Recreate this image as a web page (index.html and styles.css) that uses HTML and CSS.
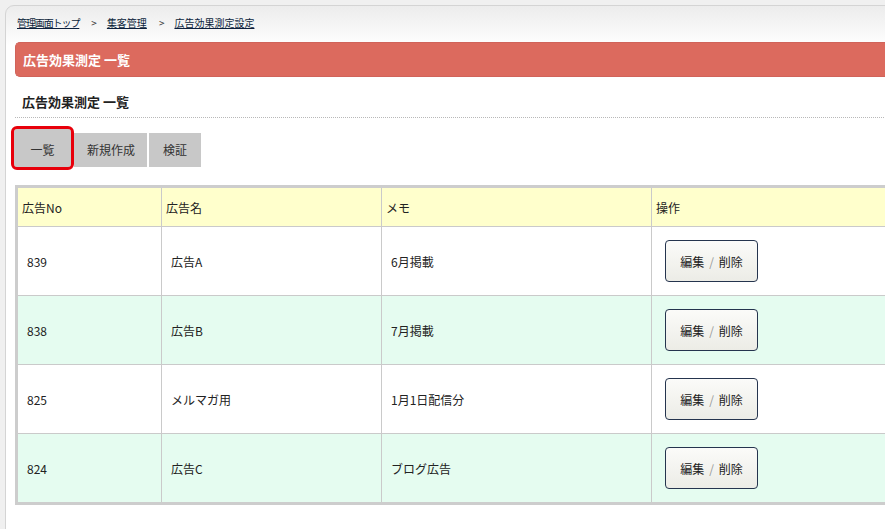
FILE: index.html
```html
<!DOCTYPE html>
<html lang="ja">
<head>
<meta charset="utf-8">
<title>広告効果測定 一覧</title>
<link rel="stylesheet" href="styles.css">
</head>
<body>
<div class="page">
  <div class="crumbs">
    <a class="top" href="#">管理画面トップ</a><span class="sep">&gt;</span><a href="#">集客管理</a><span class="sep">&gt;</span><a href="#">広告効果測定設定</a>
  </div>
  <div class="titlebar">広告効果測定 一覧</div>
  <div class="subtitle">広告効果測定 一覧</div>
  <div class="tabs">
    <a class="tab active" href="#">一覧</a>
    <a class="tab" href="#">新規作成</a>
    <a class="tab" href="#">検証</a>
  </div>
  <table class="list">
    <colgroup>
      <col class="c1"><col class="c2"><col class="c3"><col class="c4">
    </colgroup>
    <thead>
      <tr><th>広告No</th><th>広告名</th><th>メモ</th><th>操作</th></tr>
    </thead>
    <tbody>
      <tr><td>839</td><td>広告A</td><td>6月掲載</td><td><button class="edit">編集<span class="slash">/</span>削除</button></td></tr>
      <tr class="alt"><td>838</td><td>広告B</td><td>7月掲載</td><td><button class="edit">編集<span class="slash">/</span>削除</button></td></tr>
      <tr><td>825</td><td>メルマガ用</td><td>1月1日配信分</td><td><button class="edit">編集<span class="slash">/</span>削除</button></td></tr>
      <tr class="alt last"><td>824</td><td>広告C</td><td>ブログ広告</td><td><button class="edit">編集<span class="slash">/</span>削除</button></td></tr>
    </tbody>
  </table>
</div>
</body>
</html>
```
FILE: styles.css
```css
html, body {
  margin: 0;
  padding: 0;
  overflow: hidden;
  background: #f0f0f0;
}
body {
  font-family: "Noto Sans CJK JP", "Liberation Sans", sans-serif;
  color: #222;
  font-size: 12px;
}
.page {
  margin: 5px 0 0 5px;
  width: 1100px;
  height: 560px;
  box-sizing: border-box;
  border: 1px solid #d4d4d4;
  border-radius: 9px 0 0 0;
  background: linear-gradient(#ececec 0, #fdfdfd 36px, #fff 40px);
  padding: 0 0 0 9px;
}
.crumbs {
  height: 36px;
  padding: 10px 0 0 2px;
  box-sizing: border-box;
  font-size: 10px;
  line-height: 14px;
}
.crumbs a {
  color: #0c1f3c;
  text-decoration: underline;
}
.crumbs a.top { letter-spacing: -1.1px; }
.crumbs .sep {
  color: #333;
  margin: 0 10px 0 12px;
}
.titlebar {
  height: 35px;
  box-sizing: border-box;
  background: #dc6a5e;
  border: 1px solid #d0635a;
  border-right: 0;
  border-radius: 5px 0 0 5px;
  color: #fff;
  font-weight: bold;
  font-size: 13px;
  line-height: 33px;
  padding-left: 7px;
}
.subtitle {
  padding: 17px 0 7px 7px;
  line-height: 16px;
  font-weight: bold;
  font-size: 13px;
  color: #222;
  border-bottom: 1px dotted #b8b8b8;
}
.tabs {
  display: flex;
  align-items: flex-end;
  gap: 2px;
  padding: 11px 0 0 0;
  height: 49px;
  box-sizing: border-box;
}
.tab {
  display: block;
  height: 34px;
  line-height: 34px;
  background: #c8c8c8;
  color: #333;
  text-decoration: none;
  font-size: 12px;
  padding: 0 12px 0 13px;
}
.tab:nth-child(3) { padding: 0 14px; }
.tab.active {
  height: 38px;
  line-height: 42px;
  width: 57px;
  padding: 0;
  text-align: center;
  margin-left: -1px;
  margin-right: 1px;
  outline: 3px solid #e8000b;
  border-radius: 3px;
}
.list {
  margin-top: 18px;
  width: 1000px;
  table-layout: fixed;
  border-collapse: separate;
  border-spacing: 0;
  border: 3px solid #cdcdcd;
  border-right: 0;
}
col.c1 { width: 144px; }
col.c2 { width: 220px; }
col.c3 { width: 270px; }
.list th, .list td {
  border-right: 1px solid #cacaca;
  border-bottom: 1px solid #cacaca;
  text-align: left;
  font-weight: normal;
  font-size: 12px;
  color: #222;
}
.list th {
  background: #ffffcc;
  height: 38px;
  padding: 0 0 0 4px;
}
.list td {
  height: 68px;
  padding: 0 0 0 9px;
  background: #fff;
}
.list tr.alt td { background: #e5fcf0; }
.list tr.last td { border-bottom: 0; height: 68px; }
.list td:nth-child(4) { padding-left: 13px; }
.edit {
  width: 93px;
  height: 42px;
  border: 1px solid #25344e;
  border-radius: 4px;
  background: linear-gradient(#fbfbf9, #ececE6);
  font-family: "Noto Sans CJK JP", sans-serif;
  font-size: 12px;
  color: #222;
  padding: 0;
}
.edit .slash { color: #999; margin: 0 5px; }
```
